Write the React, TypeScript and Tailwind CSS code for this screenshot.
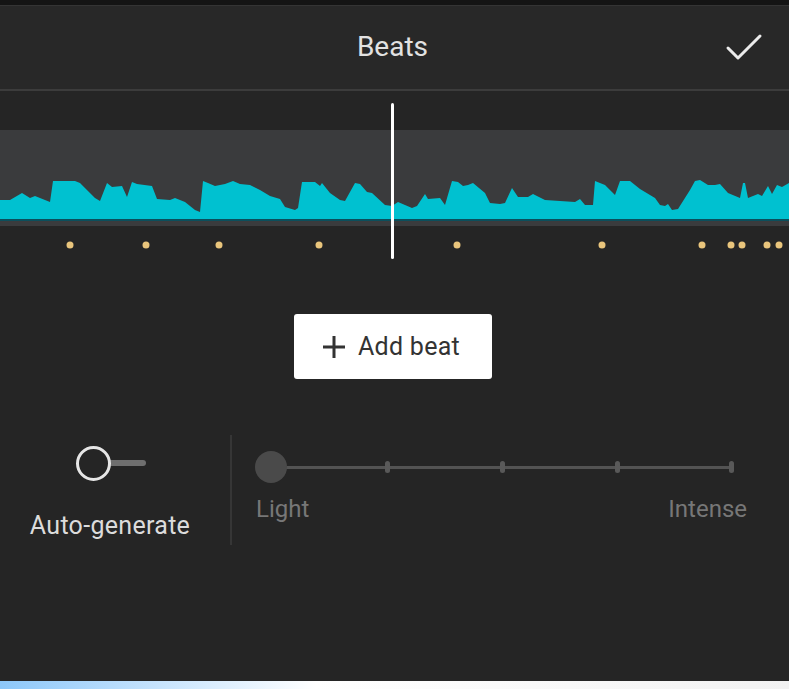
import { Check } from "lucide-react";

const WAVE: [number, number][] = [
  [0, 200], [10, 200], [22, 193], [30, 198], [35, 196], [40, 198], [50, 202], [53, 181], [75, 181], [80, 183],
  [95, 198], [100, 201], [107, 183], [112, 187], [122, 186], [127, 197], [132, 182], [137, 184], [152, 186],
  [157, 199], [170, 200], [175, 198], [185, 202], [195, 210], [200, 212], [203, 181], [208, 183], [215, 186],
  [225, 184], [233, 181], [240, 184], [250, 185], [260, 190], [270, 196], [280, 199], [285, 207], [295, 210],
  [298, 208], [302, 182], [315, 182], [320, 186], [322, 183], [330, 193], [340, 200], [345, 201], [355, 183],
  [360, 184], [367, 192], [372, 193], [385, 205], [392, 206], [398, 202], [405, 205], [412, 208], [417, 206],
  [425, 194], [428, 199], [440, 198], [445, 205], [452, 181], [458, 182], [463, 186], [468, 185], [473, 183],
  [485, 193], [490, 203], [500, 204], [505, 203], [512, 188], [518, 197], [528, 197], [533, 194], [545, 200],
  [560, 201], [575, 202], [580, 199], [585, 205], [593, 205], [595, 181], [605, 185], [615, 195], [620, 181],
  [630, 181], [640, 189], [650, 195], [655, 198], [660, 205], [665, 206], [668, 204], [672, 210], [678, 209],
  [690, 190], [695, 181], [700, 180], [708, 185], [715, 185], [720, 184], [728, 193], [740, 198], [743, 183],
  [745, 183], [748, 198], [758, 194], [762, 196], [768, 186], [772, 194], [777, 185], [782, 187], [789, 183],
];

const BEATS = [70, 146, 219, 319, 457, 602, 702, 731, 742, 767, 779];
const TICKS = [387, 502, 617, 731];

function Timeline() {
  // svg y coordinates are page coordinates minus 91
  const pts = WAVE.map(([x, y]) => `${x},${y - 91}`).join(" ");
  return (
    <div className="relative h-[223px]">
      <svg width="789" height="223" className="block">
        <rect x="0" y="39" width="789" height="96" fill="#3a3b3d" />
        <polygon points={`0,128 ${pts} 789,128`} fill="#00c1d0" />
        <rect x="0" y="128" width="789" height="2" fill="#0b4f5c" />
        {BEATS.map(x => (
          <circle key={x} cx={x} cy={154} r={3.5} fill="#e9c57c" />
        ))}
      </svg>
      <div className="absolute left-[391px] top-[12px] w-[3px] h-[156px] bg-white rounded-full" />
    </div>
  );
}

export default function App() {
  return (
    <div className="w-[789px] h-[689px] bg-[#252525] flex flex-col overflow-hidden" style={{ fontFamily: "Roboto, 'Noto Sans', sans-serif" }}>
      <div className="h-[5px] bg-[#141414]" />
      <div className="h-[86px] bg-[#282828] border-t border-[#343434] border-b-2 border-b-[#3c3c3c] flex items-center justify-center relative">
        <span className="text-[28px] leading-none text-[#e2e2e2] mt-[-2px] -ml-[4px]">Beats</span>
        <Check className="absolute right-[21px] top-[18px] w-[48px] h-[48px] text-[#ececec]" strokeWidth={1.5} />
      </div>

      <Timeline />

      <div className="flex justify-center pr-[3px]">
        <button className="w-[198px] h-[65px] bg-white rounded-[3px] flex items-center justify-center gap-[12px] pr-[4px] text-[#333]">
          <svg width="24" height="24" viewBox="0 0 24 24">
            <path d="M12 1v22M1 12h22" stroke="#333" strokeWidth="3" />
          </svg>
          <span className="text-[25px] leading-none tracking-[0.3px]">Add beat</span>
        </button>
      </div>

      <div className="flex pt-[55px]">
        <div className="w-[220px] flex flex-col items-center">
          <div className="flex items-center h-[58px] pl-[2px]">
            <div className="w-[35px] h-[35px] rounded-full border-[3px] border-[#e6e6e6] relative z-10" />
            <div className="w-[37px] h-[6px] bg-[#6f6f6f] rounded-r-full -ml-[2px]" />
          </div>
          <span className="text-[25px] leading-none text-[#dcdcdc] mt-[21px] tracking-[0.3px]">Auto-generate</span>
        </div>
        <div className="w-[2px] h-[110px] bg-[#363636] mt-[1px] ml-[10px]" />
        <div className="flex-1 flex flex-col pt-[4px] pl-[23px] pr-[42px]">
          <div className="relative h-[58px] flex items-center">
            <div className="absolute left-[16px] h-[3px] bg-[#535353]" style={{ width: 461 }} />
            {TICKS.map(t => (
              <div key={t} className="absolute w-[5px] h-[12px] rounded-sm bg-[#595959]" style={{ left: t - 2 - 255 }} />
            ))}
            <div className="w-[32px] h-[32px] rounded-full bg-[#4a4a4a] relative z-10" />
          </div>
          <div className="flex justify-between mt-[1px] text-[24px] leading-none text-[#777]">
            <span className="ml-[1px]">Light</span>
            <span>Intense</span>
          </div>
        </div>
      </div>

      <div className="flex-1" />
      <div className="h-[8px] bg-gradient-to-r from-[#8cc7f9] via-white via-40% to-[#f2f2f2]" />
    </div>
  );
}
